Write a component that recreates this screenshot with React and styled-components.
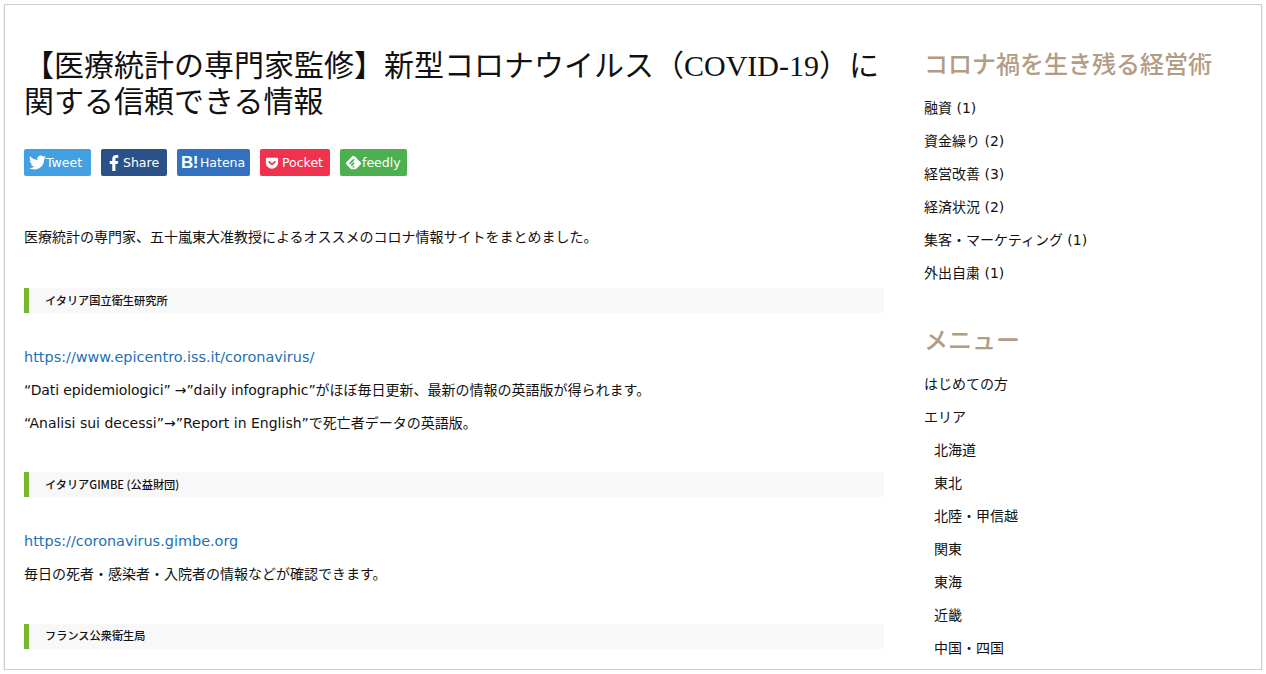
import { createGlobalStyle, styled } from 'styled-components';
import { FaTwitter, FaFacebookF, FaGetPocket } from 'react-icons/fa';
import { SiFeedly } from 'react-icons/si';

const GlobalStyle = createGlobalStyle`
  html, body {
    margin: 0;
    padding: 0;
    background: #fff;
  }
  * { box-sizing: border-box; }
`;

const Frame = styled.div`
  width: 1258px;
  height: 666px;
  margin: 4px 0 0 4px;
  border: 1px solid #cfcfcf;
  box-shadow: 0 1px 2px rgba(0, 0, 0, 0.15);
  background: #fff;
  overflow: hidden;
  display: flex;
  font-family: "DejaVu Sans", "Noto Sans CJK JP", sans-serif;
  color: #111;
`;

const Main = styled.main`
  width: 879px;
  flex-shrink: 0;
  padding: 43px 0 0 19px;
`;

const Title = styled.h1`
  margin: 0;
  font-family: "Liberation Serif", "Noto Sans CJK JP", serif;
  font-weight: 400;
  font-size: 30px;
  line-height: 36px;
  color: #111;
`;

const Shares = styled.div`
  display: flex;
  gap: 10px;
  margin-top: 29px;
`;

const ShareButton = styled.a`
  display: flex;
  align-items: center;
  gap: ${({ $gap }) => $gap}px;
  width: ${({ $w }) => $w}px;
  height: 27px;
  padding-left: ${({ $pad }) => $pad}px;
  border-radius: 2px;
  background: ${({ $bg }) => $bg};
  color: #fff;
  font-size: 12.5px;
  svg { flex-shrink: 0; }
`;

const HatenaMark = styled.span`
  font-family: "Liberation Sans", sans-serif;
  font-size: 17px;
  font-weight: 700;
  line-height: 1;
  letter-spacing: -0.5px;
`;

const Lead = styled.p`
  margin: 51px 0 40px;
  font-size: 14px;
  line-height: 21px;
`;

const Section = styled.h2`
  margin: 38.4px 0 0;
  height: 25px;
  padding: 0 0 2px 16px;
  display: flex;
  align-items: center;
  border-left: 5px solid #76b82e;
  background: #f8f8f8;
  font-family: "Noto Sans CJK JP", sans-serif;
  font-size: 11.2px;
  font-weight: 500;
  color: #111;
`;

const Body = styled.p`
  margin: ${({ $first }) => ($first ? '34px' : '12px')} 0 0;
  font-size: 14px;
  line-height: 21px;
`;

const Tight = styled.span`
  letter-spacing: -0.12px;
`;

const Link = styled.a`
  color: #1e6fb5;
  font-size: 14.45px;
`;

const Side = styled.aside`
  flex: 1;
  padding: 42px 0 0 40px;
`;

const SideTitle = styled.h3`
  margin: ${({ $first }) => ($first ? '0' : '39px')} 0 0;
  font-family: "Liberation Serif", "Noto Sans CJK JP", serif;
  font-weight: 500;
  font-size: 24px;
  line-height: 36px;
  color: #b29c84;
`;

const SideList = styled.ul`
  list-style: none;
  margin: 15px 0 0;
  padding: 0;
  display: flex;
  flex-direction: column;
  gap: 12px;
`;

const SideItem = styled.li`
  padding-left: ${({ $sub }) => ($sub ? '10px' : '0')};
  font-size: 14px;
  line-height: 21px;
`;

const buttons = [
  { label: 'Tweet', icon: <FaTwitter size={17} />, bg: '#42a0e3', w: 67, pad: 5, gap: 0 },
  { label: 'Share', icon: <FaFacebookF size={16} />, bg: '#2b5288', w: 66, pad: 5, gap: 1 },
  { label: 'Hatena', icon: <HatenaMark>B!</HatenaMark>, bg: '#3270c0', w: 73, pad: 4, gap: 2 },
  { label: 'Pocket', icon: <FaGetPocket size={14} />, bg: '#f0324f', w: 70, pad: 5, gap: 3 },
  { label: 'feedly', icon: <SiFeedly size={15} />, bg: '#4cb050', w: 67, pad: 6, gap: 1 },
];

const categories = ['融資 (1)', '資金繰り (2)', '経営改善 (3)', '経済状況 (2)', '集客・マーケティング (1)', '外出自粛 (1)'];

const menu = [
  { label: 'はじめての方' },
  { label: 'エリア' },
  { label: '北海道', sub: true },
  { label: '東北', sub: true },
  { label: '北陸・甲信越', sub: true },
  { label: '関東', sub: true },
  { label: '東海', sub: true },
  { label: '近畿', sub: true },
  { label: '中国・四国', sub: true },
];

const App = () => {
  return (
    <>
      <GlobalStyle />
      <Frame>
        <Main>
          <Title>【医療統計の専門家監修】新型コロナウイルス（COVID-19）に関する信頼できる情報</Title>
          <Shares>
            {buttons.map(({ label, icon, bg, w, pad, gap }) => (
              <ShareButton key={label} $bg={bg} $w={w} $pad={pad} $gap={gap}>
                {icon}
                {label}
              </ShareButton>
            ))}
          </Shares>
          <Lead>医療統計の専門家、五十嵐東大准教授によるオススメのコロナ情報サイトをまとめました。</Lead>

          <Section>イタリア国立衛生研究所</Section>
          <Body $first><Link>https://www.epicentro.iss.it/coronavirus/</Link></Body>
          <Body><Tight>“Dati epidemiologici” →”daily infographic”</Tight>がほぼ毎日更新、最新の情報の英語版が得られます。</Body>
          <Body>“Analisi sui decessi”→”Report in English”で死亡者データの英語版。</Body>

          <Section>イタリアGIMBE (公益財団)</Section>
          <Body $first><Link>https://coronavirus.gimbe.org</Link></Body>
          <Body>毎日の死者・感染者・入院者の情報などが確認できます。</Body>

          <Section>フランス公衆衛生局</Section>
        </Main>
        <Side>
          <SideTitle $first>コロナ禍を生き残る経営術</SideTitle>
          <SideList>
            {categories.map((c) => <SideItem key={c}>{c}</SideItem>)}
          </SideList>
          <SideTitle>メニュー</SideTitle>
          <SideList>
            {menu.map((m) => <SideItem key={m.label} $sub={m.sub}>{m.label}</SideItem>)}
          </SideList>
        </Side>
      </Frame>
    </>
  );
};

export default App;
